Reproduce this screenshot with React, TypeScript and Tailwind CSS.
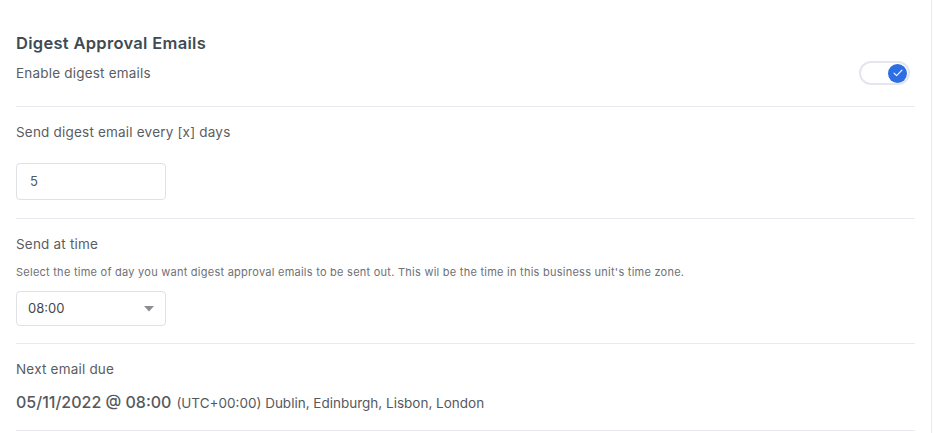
const font = { fontFamily: 'Inter, "Liberation Sans", sans-serif' }

function Toggle() {
  return (
    <div className="flex h-[24px] w-[51px] items-center justify-end rounded-full border-2 border-[#e3e6eb] bg-white pr-[1px]">
      <div className="flex h-[19px] w-[19px] items-center justify-center rounded-full bg-[#2d6fe3]">
        <svg width="10" height="8" viewBox="0 0 10 8" fill="none">
          <path d="M1 4.2l2.6 2.4L9 1.2" stroke="white" strokeWidth="1.1" strokeLinecap="round" strokeLinejoin="round" />
        </svg>
      </div>
    </div>
  )
}

export default function App() {
  return (
    <div className="w-[932px] min-h-[433px] border-r border-[#e9e9ef] bg-white px-4" style={font}>
      <section className="border-b border-[#e9e9ef] pt-[31px] pb-[21px]">
        <h2 className="h-6 text-[16.5px] leading-6 font-semibold tracking-[0.3px] text-[#3e4b53]">Digest Approval Emails</h2>
        <div className="mt-[6px] flex h-6 items-center justify-between pr-[5px]">
          <span className="text-[13.5px] tracking-[0.2px] text-[#5a5d61]">Enable digest emails</span>
          <Toggle />
        </div>
      </section>

      <section className="border-b border-[#e9e9ef] pt-[15px] pb-[18px]">
        <div className="h-5 text-[13.5px] leading-5 tracking-[0.2px] text-[#5a5d61]">Send digest email every [x] days</div>
        <div className="mt-[21px] flex h-[37px] w-[150px] items-center rounded-[4px] border border-[#dfe1e6] px-[13px] text-[13px] text-[#555a5f]">
          5
        </div>
      </section>

      <section className="border-b border-[#e9e9ef] pt-[15px] pb-[17px]">
        <div className="h-5 text-[13.5px] leading-5 tracking-[0.2px] text-[#5a5d61]">Send at time</div>
        <p className="mt-[10px] h-4 text-[11px] leading-4 tracking-[0.25px] text-[#6e7176]">
          Select the time of day you want digest approval emails to be sent out. This wil be the time in this business unit's time zone.
        </p>
        <div className="mt-[11px] flex h-[35px] w-[150px] items-center justify-between rounded-[4px] border border-[#dfe1e6] pl-[11px] pr-[11px] text-[13px] text-[#44484d]">
          <span>08:00</span>
          <svg width="10" height="6" viewBox="0 0 10 6">
            <path d="M0 0h10L5 5.5z" fill="#8a8d91" />
          </svg>
        </div>
      </section>

      <section className="border-b border-[#e9e9ef] pt-[15px] pb-[16px]">
        <div className="h-5 text-[13.5px] leading-5 tracking-[0.2px] text-[#5a5d61]">Next email due</div>
        <div className="mt-[11px] flex h-6 items-baseline gap-[5px] text-[#55595e]">
          <span className="text-[16px] font-medium">05/11/2022 @ 08:00</span>
          <span className="text-[13.5px]">(UTC+00:00) Dublin, Edinburgh, Lisbon, London</span>
        </div>
      </section>
    </div>
  )
}
